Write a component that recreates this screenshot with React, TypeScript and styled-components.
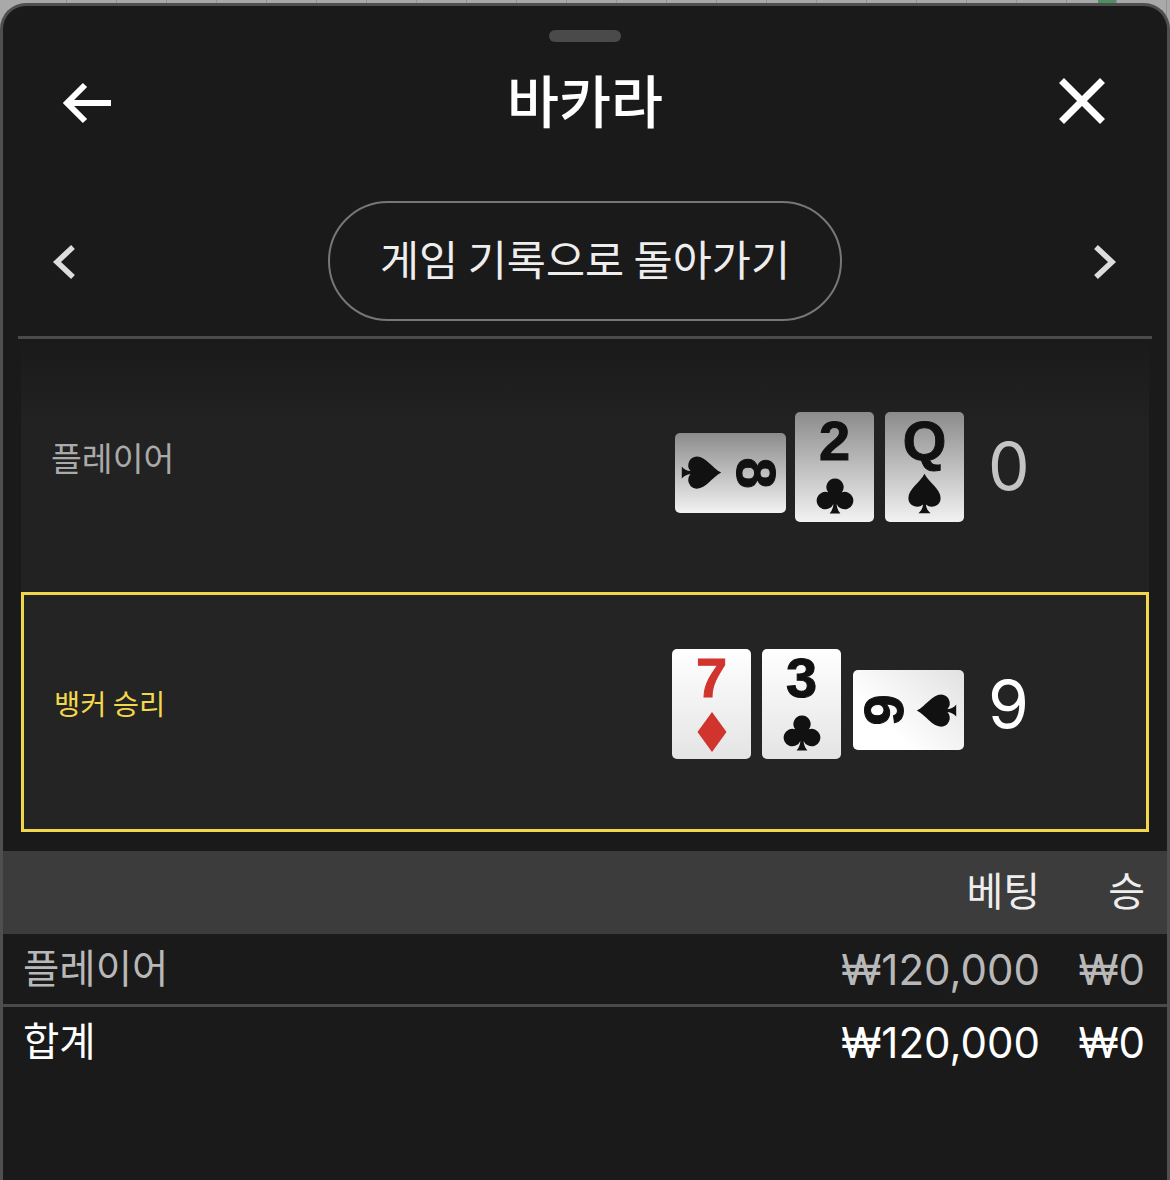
import styled, { createGlobalStyle } from "styled-components";

const GlobalStyle = createGlobalStyle`
  html, body {
    margin: 0;
    height: 1180px;
    overflow: hidden;
    font-family: "Noto Sans CJK KR", "Noto Sans", sans-serif;
  }
  body {
    background:
      linear-gradient(#4f8f62, #4f8f62) 1098px 0 / 18px 3px no-repeat,
      repeating-linear-gradient(90deg, #a9a9a9 0 49px, #929292 49px 50px) 17px 0;
  }
  * { box-sizing: border-box; }
`;

const suitPaths = {
  spade:
    "M12 1C9.5 6 3 9.5 3 14.6a4.9 4.9 0 0 0 8.2 3.5c-.2 2-1 3.7-2.6 4.900h6.800c-1.600-1.200-2.400-2.900-2.600-4.900a4.900 4.900 0 0 0 8.200-3.500C21 9.500 14.500 6 12 1z",
  club:
    "M12 1a5.4 5.4 0 0 0-4.300 8.700A5.500 5.500 0 1 0 11 17c-.2 2.500-1 4.500-2.400 6h6.800c-1.400-1.500-2.200-3.500-2.400-6a5.500 5.500 0 1 0 3.300-7.300A5.400 5.400 0 0 0 12 1z",
  diamond: "M12 0L20.700 12 12 24 3.300 12z",
};

const suitSizes = { spade: 43, club: 38, diamond: 40 };

type Suit = keyof typeof suitPaths;
type Side = "left" | "right";

interface CardData {
  rank: string;
  suit: Suit;
  red?: boolean;
  side?: Side;
}

const playerCards: CardData[] = [
  { rank: "8", suit: "spade", side: "right" },
  { rank: "2", suit: "club" },
  { rank: "Q", suit: "spade" },
];

const bankerCards: CardData[] = [
  { rank: "7", suit: "diamond", red: true },
  { rank: "3", suit: "club" },
  { rank: "9", suit: "spade", side: "left" },
];

const sideAngle = (side?: Side) => (side === "right" ? 90 : side === "left" ? -90 : 0);

function PlayingCard({ card, dim }: { card: CardData; dim?: boolean }) {
  return (
    <CardBox $side={card.side} $dim={dim}>
      <Rank $red={card.red} $side={card.side}>
        {card.rank}
      </Rank>
      <SuitIcon viewBox="0 0 24 24" $red={card.red} $side={card.side} $size={suitSizes[card.suit]}>
        <path d={suitPaths[card.suit]} />
      </SuitIcon>
    </CardBox>
  );
}

function App() {
  return (
    <>
      <GlobalStyle />
      <Panel>
        <Handle />
        <Header>
          <IconButton $align="left" $offset={59}>
            <svg width="50" height="48" viewBox="0 0 50 48" fill="none" stroke="#fff" strokeWidth="6">
              <path d="M23 8L5 26l18 18M5 26h44" />
            </svg>
          </IconButton>
          <Title>바카라</Title>
          <IconButton $align="right" $offset={60}>
            <svg width="50" height="50" viewBox="0 0 50 50" fill="none" stroke="#fff" strokeWidth="7">
              <path d="M4.500 4.500l41 41M45.500 4.500l-41 41" />
            </svg>
          </IconButton>
        </Header>
        <Nav>
          <IconButton $align="left" $offset={48}>
            <svg width="26" height="38" viewBox="0 0 26 38" fill="none" stroke="#ddd" strokeWidth="5.500">
              <path d="M22 5L6 20l16 15" />
            </svg>
          </IconButton>
          <BackPill>게임 기록으로 돌아가기</BackPill>
          <IconButton $align="right" $offset={49}>
            <svg width="26" height="38" viewBox="0 0 26 38" fill="none" stroke="#ddd" strokeWidth="5.500">
              <path d="M4 5l16 15L4 35" />
            </svg>
          </IconButton>
        </Nav>
        <Divider />
        <PlayerRow>
          <PlayerLabel>플레이어</PlayerLabel>
          <Hand>
            {playerCards.map((card) => (
              <PlayingCard key={card.rank} card={card} dim />
            ))}
          </Hand>
          <Score $dim $width={185}>0</Score>
        </PlayerRow>
        <BankerRow>
          <BankerLabel>뱅커 승리</BankerLabel>
          <Hand>
            {bankerCards.map((card) => (
              <PlayingCard key={card.rank} card={card} />
            ))}
          </Hand>
          <Score $width={182}>9</Score>
        </BankerRow>
        <Summary>
          <HeadRow>
            <span />
            <span>베팅</span>
            <span>승</span>
          </HeadRow>
          <BodyRow $dim>
            <RowName>플레이어</RowName>
            <Money>₩120,000</Money>
            <Money>₩0</Money>
          </BodyRow>
          <BodyRow>
            <RowName>합계</RowName>
            <Money>₩120,000</Money>
            <Money>₩0</Money>
          </BodyRow>
        </Summary>
      </Panel>
    </>
  );
}

const Panel = styled.div`
  position: relative;
  margin-top: 3px;
  height: 1177px;
  display: flex;
  flex-direction: column;
  background: #1a1a1a;
  border: 3px solid #4f4f4f;
  border-bottom: 0;
  border-radius: 26px 26px 0 0;
`;

const Handle = styled.div`
  width: 72px;
  height: 12px;
  margin: 24px auto 0;
  border-radius: 6px;
  background: #4a4a4a;
`;

const Header = styled.header`
  position: relative;
  height: 118px;
  display: flex;
  align-items: center;
  justify-content: center;
`;

const IconButton = styled.div<{ $align: Side; $offset: number }>`
  position: absolute;
  top: 50%;
  ${({ $align, $offset }) => `${$align}: ${$offset}px;`}
  transform: translateY(-50%);
  display: flex;
`;

const Title = styled.h1`
  margin: 0 0 6px;
  color: #fff;
  font-size: 56.500px;
  font-weight: 500;
  line-height: 1;
`;

const Nav = styled.nav`
  position: relative;
  margin-top: 41px;
  display: flex;
  justify-content: center;
`;

const BackPill = styled.div`
  width: 514px;
  height: 120px;
  padding-bottom: 8px;
  display: flex;
  align-items: center;
  justify-content: center;
  border: 2px solid #777;
  border-radius: 60px;
  color: #eee;
  font-size: 42.500px;
  font-weight: 400;
`;

const Divider = styled.div`
  height: 3px;
  margin: 15px 15px 0;
  background: #4a4a4a;
`;

const PlayerRow = styled.section`
  height: 253px;
  margin: 0 18px;
  padding: 2px 0 0 30px;
  display: flex;
  align-items: center;
  background: linear-gradient(#1a1a1a, #222 35%);
`;

const BankerRow = styled.section`
  height: 240px;
  margin: 0 18px;
  padding: 0 0 16px 30px;
  display: flex;
  align-items: center;
  background: #242424;
  border: 3px solid #f2d64b;
`;

const PlayerLabel = styled.div`
  margin-bottom: 20px;
  color: #aaa;
  font-size: 33.500px;
`;

const BankerLabel = styled.div`
  margin-bottom: 4px;
  color: #f2d64b;
  font-size: 28.500px;
`;

const Hand = styled.div`
  margin-left: auto;
  display: flex;
  align-items: flex-start;
  gap: 11px;
`;

const CardBox = styled.div<{ $side?: Side; $dim?: boolean }>`
  width: ${({ $side }) => ($side ? 111 : 79)}px;
  height: ${({ $side }) => ($side ? 80 : 110)}px;
  margin-top: ${({ $side }) => ($side ? 21 : 0)}px;
  margin-right: ${({ $side }) => ($side === "right" ? -2 : 0)}px;
  margin-left: ${({ $side }) => ($side === "left" ? 1 : 0)}px;
  display: flex;
  flex-direction: ${({ $side }) =>
    $side === "right" ? "row-reverse" : $side === "left" ? "row" : "column"};
  align-items: center;
  justify-content: space-between;
  padding: ${({ $side }) =>
    $side === "right" ? "0 15px 0 5px" : $side === "left" ? "0 6px 0 15px" : "4px 0 7px"};
  border-radius: 5px;
  background: ${({ $dim, $side }) =>
    $dim
      ? "linear-gradient(#8b8b8b, #f2f2f2)"
      : $side
        ? "linear-gradient(225deg, #e2e2e2, #fff 70%)"
        : "linear-gradient(#fff, #e4e4e4)"};
`;

const Rank = styled.span<{ $red?: boolean; $side?: Side }>`
  display: block;
  color: ${({ $red }) => ($red ? "#d0342c" : "#111")};
  font-family: "Liberation Sans", Arial, sans-serif;
  font-size: 56px;
  font-weight: 700;
  line-height: 50px;
  -webkit-text-stroke: 1px currentColor;
  transform: rotate(${({ $side }) => sideAngle($side)}deg);
`;

const SuitIcon = styled.svg<{ $red?: boolean; $side?: Side; $size: number }>`
  display: block;
  flex: none;
  width: ${({ $size }) => $size}px;
  height: ${({ $size }) => $size}px;
  fill: ${({ $red }) => ($red ? "#d0342c" : "#111")};
  transform: rotate(${({ $side }) => sideAngle($side)}deg);
`;

const Score = styled.div<{ $dim?: boolean; $width: number }>`
  width: ${({ $width }) => $width}px;
  padding-left: 24px;
  margin-bottom: ${({ $dim }) => ($dim ? 2 : 0)}px;
  color: ${({ $dim }) => ($dim ? "#c4c4c4" : "#fff")};
  font-family: Inter, "Noto Sans", sans-serif;
  font-size: 66px;
  line-height: 1;
`;

const Summary = styled.div`
  margin-top: 19px;
`;

const HeadRow = styled.div`
  height: 83px;
  padding: 0 22px 8px 0;
  display: grid;
  grid-template-columns: 1fr auto 105px;
  align-items: center;
  background: #3c3c3c;
  color: #eee;
  font-size: 40px;
  text-align: right;
`;

const BodyRow = styled.div<{ $dim?: boolean }>`
  height: ${({ $dim }) => ($dim ? 73 : 70)}px;
  padding: 0 22px 0 20px;
  display: grid;
  grid-template-columns: 1fr auto 105px;
  align-items: center;
  color: ${({ $dim }) => ($dim ? "#b8b8b8" : "#fff")};
  border-bottom: ${({ $dim }) => ($dim ? "3px solid #4a4a4a" : "0")};
`;

const RowName = styled.div`
  margin-bottom: 8px;
  font-size: 39.500px;
`;

const Money = styled.div`
  font-family: Inter, "Noto Sans", "Noto Sans CJK KR", sans-serif;
  font-size: 42px;
  text-align: right;
`;

export default App;
